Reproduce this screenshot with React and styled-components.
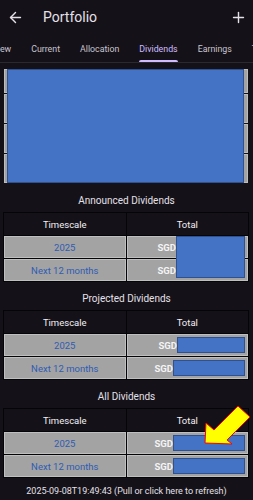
import React from 'react';
import styled, { createGlobalStyle } from 'styled-components';
import { ArrowLeft, Plus } from 'lucide-react';

const GlobalStyle = createGlobalStyle`
  html, body {
    margin: 0;
    padding: 0;
    background: #141218;
  }
  body {
    font-family: Roboto, "Noto Sans", sans-serif;
    color: #e6e0e9;
  }
  * { box-sizing: border-box; }
`;

const tabs = ['Overview', 'Current', 'Allocation', 'Dividends', 'Earnings', 'Transactions'];

const sections = [
  {
    title: 'Announced Dividends',
    merged: true,
    rows: [
      { label: '2025', box: 69 },
      { label: 'Next 12 months', box: 69 },
    ],
  },
  {
    title: 'Projected Dividends',
    rows: [
      { label: '2025', box: 68 },
      { label: 'Next 12 months', box: 72 },
    ],
  },
  {
    title: 'All Dividends',
    pointer: true,
    rows: [
      { label: '2025', box: 72 },
      { label: 'Next 12 months', box: 72 },
    ],
  },
];

export default function App() {
  return (
    <Page>
      <GlobalStyle />
      <TopBar>
        <IconButton aria-label="Back">
          <ArrowLeft size={17} strokeWidth={2} />
        </IconButton>
        <Title>Portfolio</Title>
        <IconButton aria-label="Add">
          <Plus size={17} strokeWidth={2} />
        </IconButton>
      </TopBar>

      <TabBar>
        <TabStrip>
          {tabs.map((t) => (
            <Tab key={t}>
              <TabLabel $active={t === 'Dividends'}>{t}</TabLabel>
            </Tab>
          ))}
        </TabStrip>
      </TabBar>

      <Chart>
        <ChartRow $h={24} />
        <ChartRow $h={29} />
        <ChartRow $h={29} />
        <ChartRow $h={29} />
        <ChartCover />
      </Chart>

      {sections.map((s) => (
        <Section key={s.title}>
          <SectionTitle>{s.title}</SectionTitle>
          <TableWrap>
            <Grid>
              <HeadCell>Timescale</HeadCell>
              <HeadCell>Total</HeadCell>
              {s.rows.map((r) => (
                <React.Fragment key={r.label}>
                  <BodyCell>
                    <PeriodLink>{r.label}</PeriodLink>
                  </BodyCell>
                  <BodyCell $right>
                    <Currency>SGD</Currency>
                    <Redaction $w={r.box} $ghost={s.merged} />
                  </BodyCell>
                </React.Fragment>
              ))}
            </Grid>
            {s.merged && <MergedCover />}
            {s.pointer && (
              <Pointer width="48" height="42" viewBox="0 0 48 42">
                <polygon
                  points="1,39 2,19 10,26 34,2 46,13 23,36 28,40"
                  fill="#ffff00"
                  stroke="#ff0000"
                  strokeWidth="1"
                />
              </Pointer>
            )}
          </TableWrap>
        </Section>
      ))}

      <Footer>2025-09-08T19:49:43 (Pull or click here to refresh)</Footer>
    </Page>
  );
}

const Page = styled.div`
  width: 253px;
  min-height: 500px;
  background: #141218;
  display: flex;
  flex-direction: column;
`;

const TopBar = styled.header`
  height: 34px;
  display: flex;
  align-items: center;
  padding: 0 6px 0 7px;
`;

const IconButton = styled.button`
  border: 0;
  background: none;
  padding: 0;
  width: 17px;
  height: 17px;
  color: #e6e0e9;
  display: flex;
  align-items: center;
  justify-content: center;
  cursor: pointer;
`;

const Title = styled.h1`
  flex: 1;
  margin: 0 0 0 19px;
  font-size: 14px;
  font-weight: 400;
  color: #e6e0e9;
  line-height: 17px;
`;

const TabBar = styled.nav`
  height: 29px;
  overflow: hidden;
  border-bottom: 1px solid #2b2930;
`;

const TabStrip = styled.div`
  display: flex;
  height: 100%;
  margin-left: -34.5px;
`;

const Tab = styled.div`
  flex: none;
  height: 100%;
  padding: 0 10px;
  display: flex;
`;

const TabLabel = styled.span`
  position: relative;
  display: block;
  height: 100%;
  padding-top: 10px;
  font-size: 8.8px;
  font-weight: 400;
  line-height: 11px;
  white-space: nowrap;
  color: ${(p) => (p.$active ? '#d0bcff' : '#cac4d0')};

  &::after {
    content: '';
    display: ${(p) => (p.$active ? 'block' : 'none')};
    position: absolute;
    left: 0;
    right: 0;
    bottom: 0;
    height: 2px;
    border-radius: 2px 2px 0 0;
    background: #d0bcff;
  }
`;

const Chart = styled.div`
  position: relative;
  margin: 6px 5px 1px 4px;
  display: flex;
  flex-direction: column;
  gap: 1px;
`;

const ChartRow = styled.div`
  height: ${(p) => p.$h}px;
  background: #a3a3a3;
  border: 1px solid #bdbdbd;
`;

const ChartCover = styled.div`
  position: absolute;
  top: 0;
  bottom: 0;
  left: 3px;
  right: 4px;
  background: #4472c4;
  border: 1px solid #2f528f;
`;

const Section = styled.section`
  display: flex;
  flex-direction: column;
`;

const SectionTitle = styled.h2`
  margin: 0;
  padding: 11px 0 5px;
  text-align: center;
  font-size: 10px;
  font-weight: 400;
  line-height: 12px;
  color: #e6e0e9;
`;

const TableWrap = styled.div`
  position: relative;
  margin: 0 4px 0 3px;
`;

const Grid = styled.div`
  display: grid;
  grid-template-columns: 1fr 1fr;
  gap: 1px;
  padding: 1px;
  background: #050407;
`;

const HeadCell = styled.div`
  height: 22px;
  display: flex;
  align-items: center;
  justify-content: center;
  background: #141218;
  font-size: 9.5px;
  font-weight: 400;
  color: #f3eff5;
`;

const BodyCell = styled.div`
  height: 22px;
  display: flex;
  align-items: center;
  justify-content: ${(p) => (p.$right ? 'flex-end' : 'center')};
  padding-right: ${(p) => (p.$right ? '2px' : '0')};
  background: #a3a3a3;
  border: 1px solid #bfbfbf;
`;

const PeriodLink = styled.span`
  font-size: 9.5px;
  font-weight: 400;
  color: #2f5cb3;
`;

const Currency = styled.span`
  font-size: 9.5px;
  font-weight: 700;
  color: #f4f4f4;
`;

const Redaction = styled.span`
  width: ${(p) => p.$w}px;
  height: 16px;
  background: #4472c4;
  border: 1px solid #2f528f;
  visibility: ${(p) => (p.$ghost ? 'hidden' : 'visible')};
`;

const MergedCover = styled.div`
  position: absolute;
  top: 24px;
  right: 4px;
  width: 69px;
  height: 42px;
  background: #4472c4;
  border: 1px solid #2f528f;
`;

const Pointer = styled.svg`
  position: absolute;
  left: 201px;
  top: -4px;
  overflow: visible;
`;

const Footer = styled.footer`
  padding: 7px 0 10px;
  text-align: center;
  font-size: 9px;
  line-height: 12px;
  color: #e6e0e9;
`;
